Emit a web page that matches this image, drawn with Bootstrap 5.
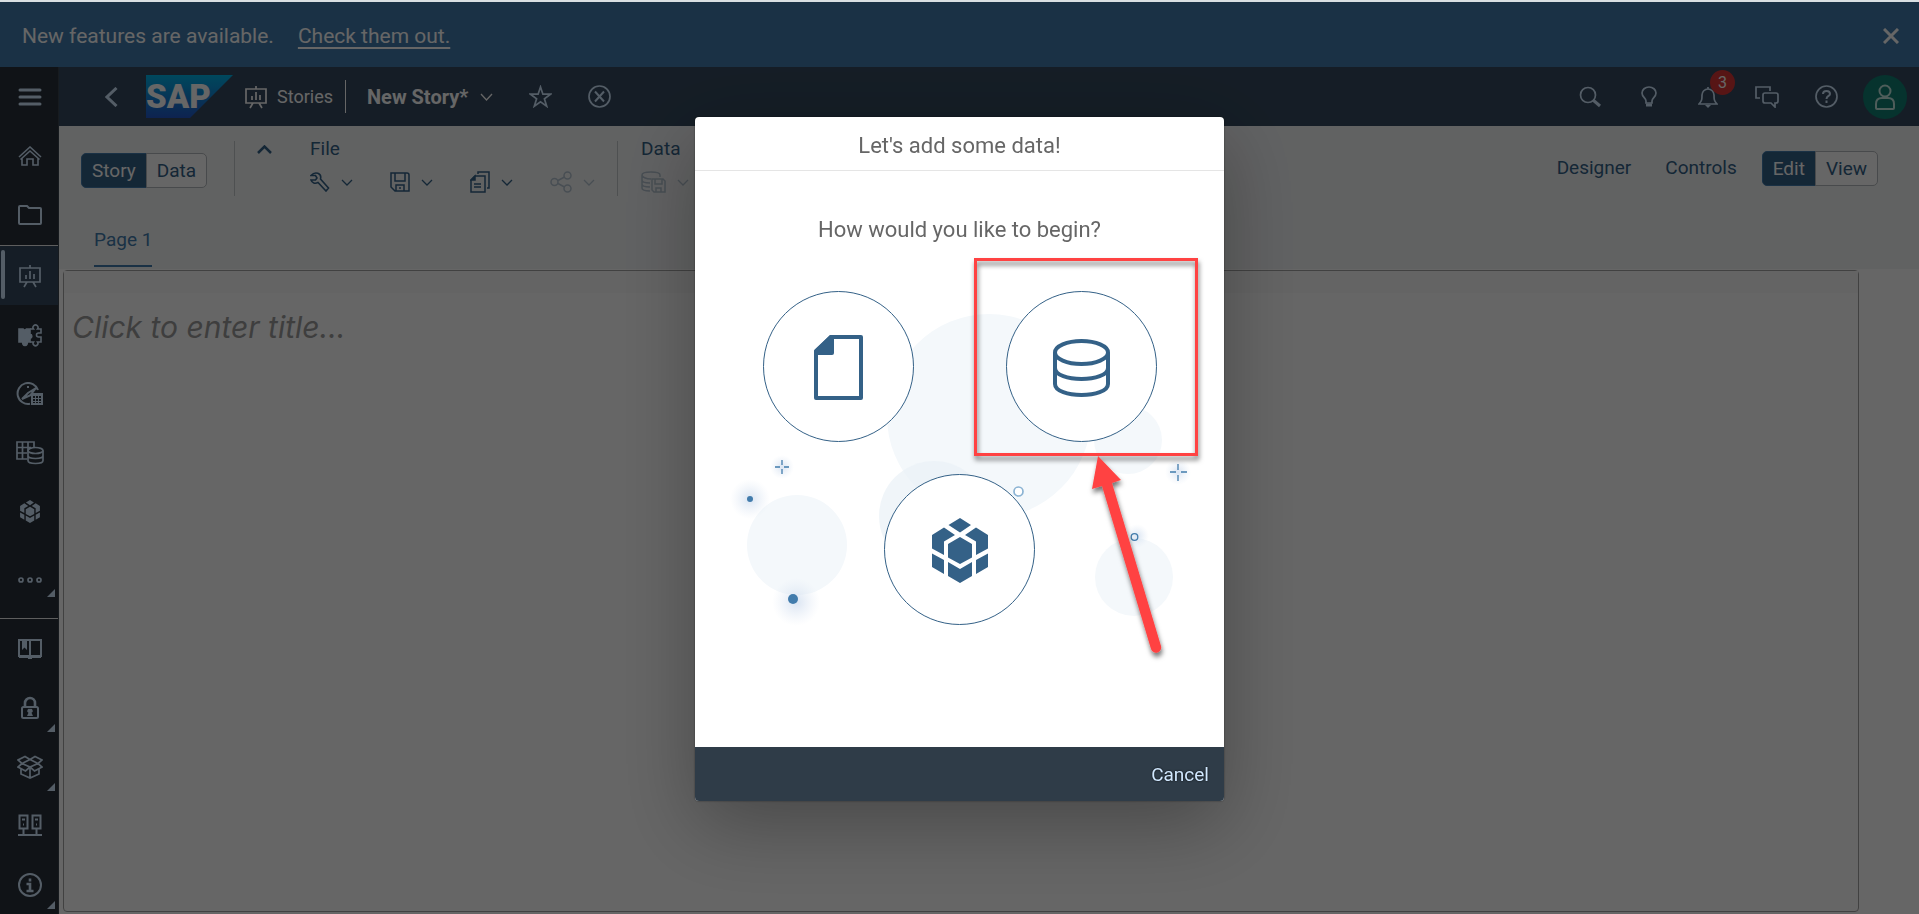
<!DOCTYPE html>
<html lang="en">
<head>
<meta charset="utf-8">
<meta name="viewport" content="width=device-width, initial-scale=1">
<title>New Story</title>
<link href="https://cdn.jsdelivr.net/npm/bootstrap@5.3.0/dist/css/bootstrap.min.css" rel="stylesheet">
<style>
  :root { --shell: #354a5f; --ink: #346187; --ice: #d1e8ff; --rail: #29313a; }
  body { font-family: Roboto, "Liberation Sans", sans-serif; font-size: 19px; line-height: 24px; }
  svg { display: block; flex: none; }
  .ico { fill: none; stroke: currentColor; stroke-width: 2; }
  .app { border-top: 2px solid #d9dfe2; }
  .plain { background: none; border: 0; padding: 0; color: inherit; display: flex; align-items: center; }

  .notice { background: #427cac; height: 65px; padding: 2px 20px 0 22px; font-size: 21px; color: #fff; gap: 24px; }
  .notice a { color: #fff; text-underline-offset: 4px; }

  .rail { background: var(--rail); width: 59px; color: var(--ice); border-right: 1px solid #3b444e; }
  .rail-btn { width: 58px; height: 59px; padding-left: 2px; justify-content: center; position: relative; flex-shrink: 0; }
  .rail-btn.current { background: var(--shell); }
  .rail-btn.current::before { content: ""; position: absolute; left: 1px; top: 4px; bottom: 6px; width: 4px; border-radius: 2px; background: var(--ice); }
  .rail-btn.more::after { content: ""; position: absolute; right: 3px; bottom: 5px; border: 4px solid; border-color: transparent currentColor currentColor transparent; }
  .rail-btn.overflow-btn { height: 77px; }
  .rail-btn.overflow-btn::after { bottom: 21px; }
  .rail hr { margin: 0; border-top: 1px solid #fff; opacity: .9; }

  .shell-bar { background: var(--shell); height: 59px; color: var(--ice); padding: 0 12px 0 46px; }
  .shell-bar .product { color: #fff; gap: 10px; margin-left: 12px; font-size: 18px; }
  .story-name { color: #fff; font-size: 20px; font-weight: 700; border-left: 1px solid #fff; height: 33px; padding-left: 21px; margin-left: 12px; gap: 12px; }
  .tools { gap: 35px; }
  .tools .plain { min-width: 24px; justify-content: center; }
  .count { position: absolute; left: 14px; top: -16px; width: 25px; height: 25px; border-radius: 50%; background: #d93636; color: #fff; font-size: 16px; line-height: 25px; text-align: center; }
  .avatar { width: 44px; height: 44px; border-radius: 50%; background: #0f8073; color: #c4e8e2; }

  .toolbar { background: #f3f5f6; color: var(--ink); }
  .toolbar-row { height: 84px; padding: 0 41px 0 22px; }
  .seg .btn { border: 1px solid #b4b9bd; color: var(--ink); background: #fff; font-size: 19px; line-height: 24px; padding: 5px 10px 4px; border-radius: 5px; }
  .seg .btn.on { background: var(--ink); border-color: #427cac; color: #fff; }
  .sep { width: 1px; height: 55px; background: #c3c7ca; }
  .group { padding-bottom: 4px; }
  .group-title { line-height: 24px; margin-bottom: 8px; }
  .menus { gap: 37px; height: 26px; }
  .menus .plain { gap: 11px; }
  .faded { color: #b4c3d0; }
  .panels { gap: 34px; }
  .panels .seg { margin-left: -9px; }
  .tabs { padding: 0 35px 2px; }
  .tabs a { display: block; height: 57px; padding-top: 18px; color: #427cac; text-decoration: none; border-bottom: 2px solid #427cac; }

  .workspace { padding: 1px 60px 2px 4px; background: #fff; }
  .sheet { border: 1px solid #a4a4a4; border-radius: 4px; }
  .sheet-top { height: 22px; background: #fafafa; }
  .title-box { border: 0; outline: 0; width: 100%; padding: 14px 8px; font-family: Inter, Roboto, sans-serif; font-size: 30px; line-height: 40px; font-style: italic; background: none; }
  .title-box::placeholder { color: #9c9c9c; opacity: 1; }

  .modal-backdrop { --bs-backdrop-opacity: .6; top: 2px; }
  .modal { padding-top: 4px; overflow: hidden; }
  .modal-dialog { max-width: 529px; }
  .modal-content { border: 0; border-radius: 4px; box-shadow: 0 0 2px rgba(0,0,0,.5), 0 24px 80px rgba(0,0,0,.3); color: #666; }
  .modal-header { height: 54px; padding: 5px 0 0; border-color: #e5e5e5; }
  .modal-header h1, .ask { font-size: 22px; line-height: 28px; font-weight: 400; margin: 0; }
  .start { padding: 45px 0 122px; position: relative; }
  .ask { margin-bottom: 47px; }
  .choices { position: relative; }
  .choices-row { gap: 92px; }
  .choices-row + .choices-row { margin-top: 32px; }
  .choice { width: 151px; height: 151px; padding-top: 2px; border-radius: 50%; border: 1px solid var(--ink); background: #fff; color: #346187; justify-content: center; }
  .scene, .pointer { position: absolute; left: 0; top: 0; pointer-events: none; }
  .modal-footer { height: 54px; background: #2f3c48; border: 0; padding: 2px 15px 0; border-radius: 0 0 4px 4px; }
  .modal-footer .plain { color: var(--ice); margin: 0; text-shadow: 0 0 2px #000; }
</style>
</head>
<body>
<div class="app d-flex flex-column vh-100 overflow-hidden">
  <div class="notice d-flex align-items-center">
    <span>New features are available.</span>
    <a href="#">Check them out.</a>
    <button class="plain ms-auto" type="button" aria-label="Dismiss">
      <svg width="16" height="16" class="ico" style="stroke-width:3"><path d="M1 1l14 14M15 1L1 15"/></svg>
    </button>
  </div>

  <div class="d-flex flex-grow-1">
    <nav class="rail d-flex flex-column" aria-label="Main">
      <button class="plain rail-btn" type="button" aria-label="Menu">
        <svg width="24" height="18" class="ico" style="stroke-width:3;stroke-linecap:round"><path d="M2 2h20M2 9h20M2 16h20"/></svg>
      </button>
      <button class="plain rail-btn" type="button" aria-label="Home">
        <svg width="24" height="20" class="ico" style="stroke-width:1.6"><path d="M1 11L12 1l11 10M2.500 13.500L12 5l9.500 8.500M4 12v7h5v-6h6v6h5v-7"/></svg>
      </button>
      <button class="plain rail-btn" type="button" aria-label="Files">
        <svg width="24" height="20" class="ico"><path d="M1 18V2q0-1 1-1h7l2 2h11q1 0 1 1v14q0 1-1 1H2q-1 0-1-1z"/></svg>
      </button>
      <hr class="mt-auto">
      <button class="plain rail-btn current" type="button" aria-label="Stories">
        <svg width="22" height="24" class="ico" style="stroke-width:1.7"><path d="M1 4h20v14H1zM11 1v3M8 18l-3 5M14 18l3 5M7 15v-4M11 15V7M15 15v-5"/></svg>
      </button>
      <button class="plain rail-btn" type="button" aria-label="Applications">
        <svg width="24" height="24" class="ico" style="stroke-width:1.6"><path fill="currentColor" d="M1 6h4a2 2 0 0 0 3.500 0H12v5a2.300 2.300 0 0 1 0 4.500V19H9a2.300 2.300 0 1 1-4 0H1z"/><path d="M12 6h3.500a2.500 2.500 0 1 1 4 0H23v4h-2.500a2 2 0 1 0 0 4H23V19h-3.500a2.400 2.400 0 1 1-4 0H12"/></svg>
      </button>
      <button class="plain rail-btn" type="button" aria-label="Digital Boardroom">
        <svg width="28" height="24" class="ico"><path d="M22 8A10.500 10.500 0 1 0 14 21.800M20 6L12 11l-6 6 8-3.500L20 6zM11 5h2"/><path fill="currentColor" stroke="none" fill-rule="evenodd" d="M15 11h12v12H15zM17 14v2h2v-2zM20 14v2h2v-2zM23 14v2h2v-2zM17 17v2h2v-2zM20 17v2h2v-2zM23 17v2h2v-2zM17 20v1h2v-1zM20 20v1h2v-1zM23 20v1h2v-1z"/></svg>
      </button>
      <button class="plain rail-btn" type="button" aria-label="Datasets">
        <svg width="28" height="24" class="ico" style="stroke-width:1.700"><path d="M11 18H1V1h17v5M1 6.500h14M1 12h10M6.500 1v17M12 1v9"/><ellipse cx="19.500" cy="9.500" rx="7.500" ry="3"/><path d="M12 9.500v10c0 4 15 4 15 0v-10M12 14.500c0 4 15 4 15 0"/></svg>
      </button>
      <button class="plain rail-btn" type="button" aria-label="Modeler">
        <svg width="20" height="23" viewBox="0 0 56 65" fill="currentColor"><use href="#cube"/></svg>
      </button>
      <button class="plain rail-btn more overflow-btn" type="button" aria-label="More">
        <svg width="24" height="6" class="ico" style="stroke-width:1.700"><circle cx="3" cy="3" r="2"/><circle cx="12" cy="3" r="2"/><circle cx="21" cy="3" r="2"/></svg>
      </button>
      <hr>
      <button class="plain rail-btn" type="button" aria-label="Catalog">
        <svg width="24" height="20" class="ico"><path d="M1 1h22v16H1zM12 1v16M1 18h22M10 19h4"/><path fill="currentColor" stroke="none" d="M4 1h5v10L6.500 8.500 4 11z"/></svg>
      </button>
      <button class="plain rail-btn more" type="button" aria-label="Security">
        <svg width="18" height="23" class="ico"><rect x="1" y="11" width="16" height="11" rx="1.500"/><path stroke-width="2.600" d="M4 11V7a5 5 0 0 1 10 0v4"/><path fill="currentColor" stroke="none" d="M9 13a2 2 0 0 1 1.500 3.800L12 20H6l1.500-3.200A2 2 0 0 1 9 13z"/></svg>
      </button>
      <button class="plain rail-btn more" type="button" aria-label="Deployment">
        <svg width="26" height="24" class="ico" style="stroke-width:1.700"><path d="M13 4.500L8 1.500 1 5l4 3.500L13 4.500l8 4L25 5l-7-3.500zM5 8.500L1 12l7.500 4L13 12l4.500 4 7.500-4-4-3.500-8 3.500zM4 14v5l9 4 9-4v-5M13 12v11"/></svg>
      </button>
      <button class="plain rail-btn" type="button" aria-label="Connections">
        <svg width="24" height="24" class="ico"><path d="M1.500 1.500h8v13h-8zM14.500 1.500h8v13h-8zM5.500 14v7M18.500 14v7M0 21h24M4 5.500h3M17 5.500h3M5 10.500h1M18 10.500h1"/></svg>
      </button>
      <button class="plain rail-btn more" type="button" aria-label="System">
        <svg width="24" height="24" class="ico"><circle cx="12" cy="12" r="11"/><path stroke-width="2.600" d="M12 5.500v3M8.500 11H12v7M8.500 18h7"/></svg>
      </button>
    </nav>

    <div class="d-flex flex-column flex-grow-1">
      <header class="shell-bar d-flex align-items-center">
        <button class="plain" type="button" aria-label="Back">
          <svg width="13" height="20" class="ico" style="stroke-width:3"><path d="M11.500 1L2 10l9.500 9"/></svg>
        </button>
        <a href="#" aria-label="SAP home" style="margin-left:28px">
          <svg width="87" height="43" viewBox="0 0 87 43">
            <defs><linearGradient id="sapfill" x1="0" y1="0" x2="0" y2="1"><stop offset="0" stop-color="#00b4e8"/><stop offset="1" stop-color="#2457c8"/></linearGradient></defs>
            <path fill="url(#sapfill)" d="M0 0h87L44 43H0z"/>
            <text x="0" y="33" font-family="Roboto" font-weight="900" font-size="33" fill="#fff">SAP</text>
          </svg>
        </a>
        <div class="product d-flex align-items-center">
          <svg width="22" height="24" class="ico" style="stroke-width:1.7"><path d="M1 4h20v14H1zM11 1v3M8 18l-3 5M14 18l3 5M7 15v-4M11 15V7M15 15v-5"/></svg>
          <span>Stories</span>
        </div>
        <button class="plain story-name" type="button">New Story*
          <svg width="13" height="8" class="ico" style="stroke-width:1.300"><path d="M1 1l5.500 6L12 1"/></svg>
        </button>
        <button class="plain" style="margin-left:36px" type="button" aria-label="Favorite">
          <svg width="23" height="23" class="ico" style="stroke-width:1.700"><path d="M11.500 2l2.400 7.200h7.600l-6.100 4.600 2.300 7.400-6.200-4.500-6.200 4.500 2.300-7.400-6.100-4.600h7.600z"/></svg>
        </button>
        <button class="plain" style="margin-left:36px" type="button" aria-label="Close story">
          <svg width="23" height="23" class="ico" style="stroke-width:1.700"><circle cx="11.500" cy="11.500" r="10.500"/><path stroke-width="2" d="M7 6.500l9 10M16 6.500l-9 10"/></svg>
        </button>

        <div class="tools d-flex align-items-center ms-auto">
          <button class="plain" type="button" aria-label="Search">
            <svg width="22" height="22" class="ico" style="stroke-width:1.7"><circle cx="9" cy="9" r="7.500"/><path stroke-width="3" d="M14 14l7 6"/></svg>
          </button>
          <button class="plain" type="button" aria-label="Ideas">
            <svg width="16" height="22" class="ico" style="stroke-width:1.7"><path d="M5 15c0-3-4-4-4-8a7 6 0 0 1 14 0c0 4-4 5-4 8v2H5z"/><path stroke-width="3" d="M5 19h6"/></svg>
          </button>
          <button class="plain position-relative" type="button" aria-label="Notifications">
            <svg width="20" height="22" class="ico" style="stroke-width:1.7"><path d="M1 18h18c-3-3-3-5-3-9a6 6 0 0 0-12 0c0 4 0 6-3 9zM10 1v2"/><path fill="currentColor" stroke="none" d="M7 19h6l-3 3z"/></svg>
            <span class="count">3</span>
          </button>
          <button class="plain" type="button" aria-label="Comments">
            <svg width="24" height="22" class="ico" style="stroke-width:1.700"><path d="M5 12H1V1h14v4M10 7h11q2 0 2 2v6q0 2-2 2h-1v4l-4-4h-6q-2 0-2-2V9q0-2 2-2z"/></svg>
          </button>
          <button class="plain" type="button" aria-label="Help">
            <svg width="23" height="23" class="ico" style="stroke-width:1.7"><circle cx="11.500" cy="11.500" r="10.500"/><path stroke-width="2" d="M8 9q0-3 3.500-3T15 9c0 2-3.500 2-3.500 5M11.500 15.500v2.500"/></svg>
          </button>
          <button class="plain avatar" style="margin-left:-10px" type="button" aria-label="Profile">
            <svg width="20" height="26" class="ico"><circle cx="10" cy="7" r="5.500"/><path d="M1 24v-4q0-6 6-6h6q6 0 6 6v4q0 1-1 1H2q-1 0-1-1z"/></svg>
          </button>
        </div>
      </header>

      <section class="toolbar">
        <div class="toolbar-row d-flex align-items-center">
          <div class="btn-group seg mt-1">
            <button class="btn on" type="button">Story</button>
            <button class="btn" type="button">Data</button>
          </div>
          <div class="sep" style="margin-left:27px"></div>
          <button class="plain align-self-start" style="margin:19px 0 0 22px" type="button" aria-label="Collapse toolbar">
            <svg width="15" height="9" class="ico" style="stroke-width:2.500"><path d="M1 8l6.500-6.500L14 8"/></svg>
          </button>
          <div class="group" style="margin-left:38px">
            <div class="group-title">File</div>
            <div class="menus d-flex align-items-center">
              <button class="plain" type="button" aria-label="Settings">
                <svg width="20" height="20" class="ico" style="stroke-width:1.600"><path d="M1 3.500C5-1 12 1 10.500 7l8 9-2.500 3-8-8.500c-3 1.500-6 .5-7-2.500h4.500L7 6 5.500 3.500z"/></svg>
                <svg width="12" height="7" class="ico" style="stroke-width:1.300"><path d="M1 1l5 5 5-5"/></svg>
              </button>
              <button class="plain" type="button" aria-label="Save">
                <svg width="20" height="20" class="ico" style="stroke-width:1.500"><path d="M1 1h16q2 0 2 2v16H5l-4-4zM5 1v8h10V1M6 19v-6h8v6M10 15v2"/></svg>
                <svg width="12" height="7" class="ico" style="stroke-width:1.300"><path d="M1 1l5 5 5-5"/></svg>
              </button>
              <button class="plain" type="button" aria-label="Copy">
                <svg width="20" height="22" class="ico" style="stroke-width:1.500"><path d="M5 5h10v16H1V9zM8 3V1h11v16h-2M4 13h7M4 16h7"/><path fill="currentColor" d="M5 5v4H1z"/></svg>
                <svg width="12" height="7" class="ico" style="stroke-width:1.300"><path d="M1 1l5 5 5-5"/></svg>
              </button>
              <button class="plain faded" type="button" aria-label="Share">
                <svg width="22" height="22" class="ico" style="stroke-width:1.500"><circle cx="4.500" cy="11" r="3.500"/><circle cx="17.500" cy="4.500" r="3.500"/><circle cx="17.500" cy="17.500" r="3.500"/><path d="M8 9.500l6.500-3.500M8 12.500l6.500 3.500"/></svg>
                <svg width="12" height="7" class="ico" style="stroke-width:1.300"><path d="M1 1l5 5 5-5"/></svg>
              </button>
            </div>
          </div>
          <div class="sep" style="margin:0 23px 0 22px"></div>
          <div class="group">
            <div class="group-title">Data</div>
            <div class="menus d-flex align-items-center">
              <button class="plain faded" type="button" aria-label="Data source">
                <svg width="25" height="22" class="ico" style="stroke-width:1.500"><path d="M19 6V4C19 0 1 0 1 4v13c0 2 4 3 8 3M1 4c0 2 4 4 9 4M1 9c0 2 4 3 8 3M1 13c0 2 4 3 8 3M11 8h11l2 2v11H13l-2-2zM14 8v5h7V8M15 21v-4h5v4"/></svg>
                <svg width="12" height="7" class="ico" style="stroke-width:1.300"><path d="M1 1l5 5 5-5"/></svg>
              </button>
            </div>
          </div>
          <div class="panels d-flex align-items-center ms-auto">
            <button class="plain" type="button">Designer</button>
            <button class="plain" type="button">Controls</button>
            <div class="btn-group seg">
              <button class="btn on" type="button">Edit</button>
              <button class="btn" type="button">View</button>
            </div>
          </div>
        </div>
        <div class="tabs d-flex"><a href="#">Page 1</a></div>
      </section>

      <main class="workspace d-flex flex-grow-1">
        <div class="sheet flex-grow-1">
          <div class="sheet-top"></div>
          <input class="title-box" type="text" aria-label="Story title" placeholder="Click to enter title...">
        </div>
      </main>
    </div>
  </div>
</div>

<div class="modal-backdrop show"></div>
<div class="modal show d-block" tabindex="-1" role="dialog" aria-labelledby="dlg-title">
  <div class="modal-dialog modal-dialog-centered">
    <div class="modal-content">
      <div class="modal-header justify-content-center"><h1 id="dlg-title">Let's add some data!</h1></div>
      <div class="start">
        <!-- bubbles and sparks behind the three choices -->
        <svg class="scene" width="529" height="576" viewBox="695 171 529 576">
          <defs>
            <radialGradient id="halo"><stop offset="0" stop-color="#c9d8ec" stop-opacity=".7"/><stop offset="1" stop-color="#dfe8f4" stop-opacity="0"/></radialGradient>
            <g id="cube"><path d="M28 0l11 7-11 7.500L16.500 7zM12 9.500l11 7.500-11 6.500V37L0 30.500V17zM44 9.500L56 17v13.500L44 37V23.500L33 17zM28 19l12 7v13.500L28 46l-12-6.500V26zM0 35.500l12 6.500v14L0 49zM56 35.500L44 42v14l12-7zM16 44l12 7 12-7v14l-12 7-12-7z"/></g>
          </defs>
          <g fill="#f4f8fb">
            <circle cx="989" cy="416" r="102"/><circle cx="1128" cy="440" r="34"/>
            <circle cx="934" cy="516" r="55" fill="#ebf1f7" fill-opacity=".75"/>
            <circle cx="797" cy="545" r="50"/><circle cx="1134" cy="577" r="39"/>
          </g>
          <g fill="url(#halo)">
            <circle cx="750" cy="499" r="20"/><circle cx="796" cy="602" r="24"/><circle cx="782" cy="467" r="12"/><circle cx="1178" cy="472" r="13"/><circle cx="1137" cy="536" r="12"/>
          </g>
          <g fill="#427cac"><circle cx="750" cy="499" r="3"/><circle cx="793" cy="599" r="5"/></g>
          <g fill="none" stroke="#427cac" stroke-width="1.300">
            <path d="M782 460v5M782 469v5M775 467h5M784 467h5M1178 464v6M1178 475v6M1170 472h6M1181 472h6"/>
            <circle cx="1134.500" cy="537" r="3.300"/>
          </g>
        </svg>
        <p class="ask text-center position-relative">How would you like to begin?</p>
        <div class="choices">
          <div class="choices-row d-flex justify-content-center">
            <button class="plain choice" type="button" aria-label="Upload a file">
              <svg width="49" height="65"><path fill="none" stroke="currentColor" stroke-width="4" stroke-linejoin="round" d="M2 16v47h45V2H17z"/><path fill="currentColor" d="M0 16L16 0h4v18q0 2-2 2H0z"/></svg>
            </button>
            <button class="plain choice" type="button" aria-label="Use a data source">
              <svg width="57" height="58" fill="none" stroke="currentColor" stroke-width="4"><ellipse cx="28.500" cy="13.500" rx="26.500" ry="11.500"/><path d="M2 13.500V45c0 14.500 53 14.500 53 0V13.500M2 29c0 14.500 53 14.500 53 0"/></svg>
            </button>
          </div>
          <div class="choices-row d-flex justify-content-center">
            <button class="plain choice" type="button" aria-label="Use a model">
              <svg width="56" height="65" fill="currentColor"><use href="#cube"/></svg>
            </button>
          </div>
        </div>
        <svg class="pointer" width="529" height="576" viewBox="695 171 529 576">
          <defs><filter id="drop" x="-20%" y="-20%" width="140%" height="140%"><feDropShadow dx="1" dy="4" stdDeviation="2.500" flood-opacity=".55"/></filter></defs>
          <circle cx="1018.500" cy="491.500" r="4.500" fill="#fff" stroke="#8bb3d3" stroke-width="1.700"/>
          <g filter="url(#drop)">
            <rect x="975.500" y="259.500" width="221" height="195" fill="none" stroke="#ff4242" stroke-width="3"/>
          </g>
          <g filter="url(#drop)" fill="#ff4242">
            <path d="M1098 456l23 24-9 3 49 163a5 5 0 0 1-10 3l-49-163-10 3z"/>
          </g>
        </svg>
      </div>
      <div class="modal-footer"><button class="plain" type="button">Cancel</button></div>
    </div>
  </div>
</div>
<script src="https://cdn.jsdelivr.net/npm/bootstrap@5.3.0/dist/js/bootstrap.bundle.min.js"></script>
</body>
</html>
